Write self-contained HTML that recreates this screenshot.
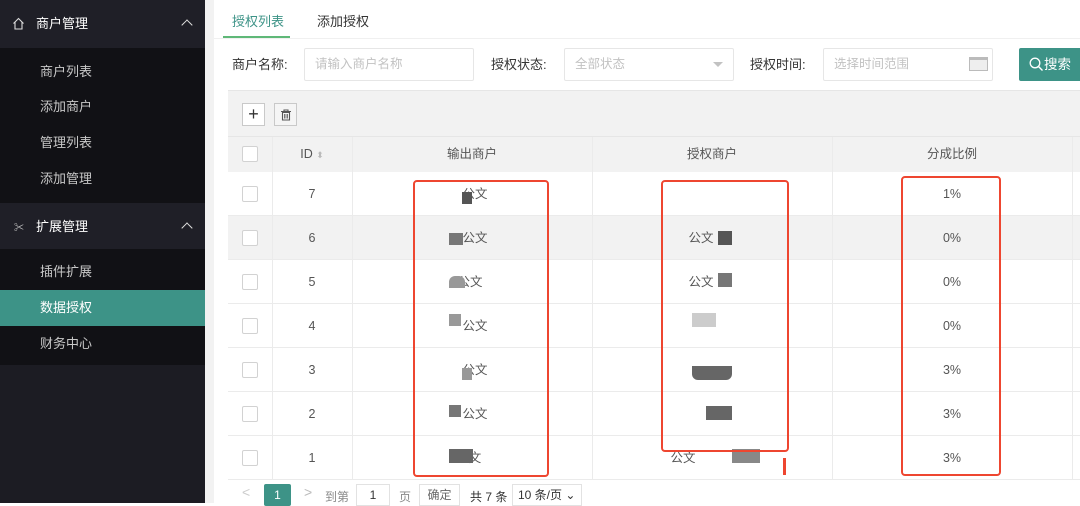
<!DOCTYPE html>
<html><head><meta charset="utf-8"><style>
*{margin:0;padding:0;box-sizing:border-box}
body{width:1080px;height:503px;overflow:hidden;background:#fff;font-family:"Liberation Sans","Noto Sans CJK SC",sans-serif;font-size:13px;color:#333;position:relative}
.a{position:absolute}
.side{left:0;top:0;width:205px;height:503px;background:#1c1c23}
.hd{left:0;width:205px;height:48px;color:#fff;font-size:13px;line-height:48px;padding-left:36px}
.sub{left:0;width:205px;background:#111115}
.it{left:0;width:205px;height:36px;line-height:36px;padding-left:40px;color:#c8c8c8;font-size:13px}
.chev{right:16px;top:20px;width:8px;height:8px;border-left:1.5px solid #ddd;border-top:1.5px solid #ddd;transform:rotate(45deg)}
.inp{border:1px solid #e6e6e6;height:33px;border-radius:2px;background:#fff;color:#c2c2c2;line-height:31px;padding-left:10px;font-size:12.5px}
.lbl{font-size:13px;color:#333;line-height:33px}
.row{left:228px;width:852px;height:44px;border-bottom:1px solid #ebebeb;background:#fff}
.cb{width:16px;height:16px;border:1px solid #d2d2d2;background:#fff;border-radius:2px}
.vl{width:1px;background:#ebebeb}
.c{text-align:center;line-height:44px;font-size:12.5px;color:#555}
.red{border:2px solid #ee4630;border-radius:4px}
.blk{background:#777}
</style></head><body>
<div class="a side"></div>
<div class="a hd" style="top:0;background:#1f1f27">商户管理</div>
<svg class="a" style="left:12px;top:17px" width="13" height="13" viewBox="0 0 13 13"><path d="M1.5 6.5L6.5 1.5L11.5 6.5M3 5.2V12H10V5.2" fill="none" stroke="#ddd" stroke-width="1.1"/></svg>
<div class="a chev" style="left:183px;top:21px"></div>
<div class="a sub" style="top:48px;height:155px"></div>
<div class="a it" style="top:54px">商户列表</div>
<div class="a it" style="top:89px">添加商户</div>
<div class="a it" style="top:125px">管理列表</div>
<div class="a it" style="top:161px">添加管理</div>
<div class="a hd" style="top:203px;background:#1f1f27">扩展管理</div>
<div class="a" style="left:14px;top:219px;color:#ccc;font-size:10px">✂</div>
<div class="a chev" style="left:183px;top:224px"></div>
<div class="a sub" style="top:249px;height:116px"></div>
<div class="a it" style="top:254px">插件扩展</div>
<div class="a it" style="top:290px;background:#3d9387;color:#fff">数据授权</div>
<div class="a it" style="top:326px">财务中心</div>
<div class="a" style="left:205px;top:0;width:9px;height:503px;background:#f2f2f2"></div>

<div class="a" style="left:214px;top:38px;width:866px;height:1px;background:#f0f0f0"></div>
<div class="a" style="left:232px;top:11px;color:#3d9387;font-size:13px">授权列表</div>
<div class="a" style="left:223px;top:36px;width:67px;height:2px;background:#5fb878"></div>
<div class="a" style="left:317px;top:11px;font-size:13px">添加授权</div>

<div class="a lbl" style="left:232px;top:48px">商户名称:</div>
<div class="a inp" style="left:304px;top:48px;width:170px">请输入商户名称</div>
<div class="a lbl" style="left:491px;top:48px">授权状态:</div>
<div class="a inp" style="left:564px;top:48px;width:170px">全部状态</div>
<div class="a" style="left:713px;top:62px;border:5px solid transparent;border-top:5px solid #c2c2c2"></div>
<div class="a lbl" style="left:750px;top:48px">授权时间:</div>
<div class="a inp" style="left:823px;top:48px;width:170px">选择时间范围</div>
<div class="a" style="left:969px;top:57px;width:19px;height:14px;border:1px solid #bbb;background:#eee;border-top:3px solid #bbb"></div>
<div class="a" style="left:1019px;top:48px;width:70px;height:33px;background:#3d9387;border-radius:2px;color:#fff;line-height:33px;padding-left:10px;font-size:13.5px">
<svg style="vertical-align:-3px" width="15" height="15" viewBox="0 0 15 15"><circle cx="6" cy="6" r="4.8" fill="none" stroke="#fff" stroke-width="1.3"/><path d="M9.5 9.5L13.5 13.5" stroke="#fff" stroke-width="1.4"/></svg>搜索</div>

<div class="a" style="left:228px;top:90px;width:852px;height:82px;background:#f2f2f2;border-top:1px solid #e6e6e6"></div>
<div class="a" style="left:242px;top:103px;width:23px;height:23px;border:1px solid #c9c9c9;background:#fff;text-align:center;line-height:20px;font-size:18px;color:#333">+</div>
<div class="a" style="left:274px;top:103px;width:23px;height:23px;border:1px solid #c9c9c9;background:#f5f5f5"></div>
<svg class="a" style="left:280px;top:109px" width="12" height="12" viewBox="0 0 12 12"><path d="M1 2.5H11M4 2.5V1H8V2.5M2.5 3.5H9.5V11H2.5Z" fill="none" stroke="#555" stroke-width="1.1"/><path d="M4.5 5V9.5M6 5V9.5M7.5 5V9.5" stroke="#555" stroke-width=".8"/></svg>
<div class="a" style="left:228px;top:136px;width:852px;height:1px;background:#e6e6e6"></div>
<div class="a cb" style="left:242px;top:146px"></div>
<div class="a c" style="left:272px;top:132px;width:80px;color:#555">ID <span style="color:#bbb;font-size:9px">⬍</span></div>
<div class="a c" style="left:352px;top:132px;width:240px">输出商户</div>
<div class="a c" style="left:592px;top:132px;width:240px">授权商户</div>
<div class="a c" style="left:832px;top:132px;width:240px">分成比例</div>

<div class="a row" style="top:172px"></div>
<div class="a row" style="top:216px;background:#f2f2f2"></div>
<div class="a row" style="top:260px"></div>
<div class="a row" style="top:304px"></div>
<div class="a row" style="top:348px"></div>
<div class="a row" style="top:392px"></div>
<div class="a row" style="top:436px"></div>
<div class="a vl" style="left:272px;top:137px;height:342px"></div>
<div class="a vl" style="left:352px;top:137px;height:342px"></div>
<div class="a vl" style="left:592px;top:137px;height:342px"></div>
<div class="a vl" style="left:832px;top:137px;height:342px"></div>
<div class="a vl" style="left:1072px;top:137px;height:342px"></div>

<div class="a cb" style="left:242px;top:186px"></div><div class="a c" style="left:272px;top:172px;width:80px">7</div>
<div class="a cb" style="left:242px;top:230px"></div><div class="a c" style="left:272px;top:216px;width:80px">6</div>
<div class="a cb" style="left:242px;top:274px"></div><div class="a c" style="left:272px;top:260px;width:80px">5</div>
<div class="a cb" style="left:242px;top:318px"></div><div class="a c" style="left:272px;top:304px;width:80px">4</div>
<div class="a cb" style="left:242px;top:362px"></div><div class="a c" style="left:272px;top:348px;width:80px">3</div>
<div class="a cb" style="left:242px;top:406px"></div><div class="a c" style="left:272px;top:392px;width:80px">2</div>
<div class="a cb" style="left:242px;top:450px"></div><div class="a c" style="left:272px;top:436px;width:80px">1</div>

<div class="a c" style="left:460px;top:172px;width:30px;line-height:44px">公文</div><div class="a blk" style="left:462px;top:192px;width:10px;height:12px;background:#555"></div>
<div class="a c" style="left:460px;top:216px;width:30px">公文</div><div class="a blk" style="left:449px;top:233px;width:14px;height:12px"></div>
<div class="a c" style="left:455px;top:260px;width:30px">公文</div><div class="a blk" style="left:449px;top:276px;width:16px;height:12px;background:#999;border-radius:6px 6px 0 0"></div>
<div class="a c" style="left:460px;top:304px;width:30px">公文</div><div class="a blk" style="left:449px;top:314px;width:12px;height:12px;background:#999"></div>
<div class="a c" style="left:460px;top:348px;width:30px">公文</div><div class="a blk" style="left:462px;top:368px;width:10px;height:12px;background:#999"></div>
<div class="a c" style="left:460px;top:392px;width:30px">公文</div><div class="a blk" style="left:449px;top:405px;width:12px;height:12px"></div>
<div class="a c" style="left:460px;top:436px;width:30px">文</div><div class="a blk" style="left:449px;top:449px;width:24px;height:14px;background:#666"></div>

<div class="a c" style="left:686px;top:216px;width:30px">公文</div><div class="a blk" style="left:718px;top:231px;width:14px;height:14px;background:#555"></div>
<div class="a c" style="left:686px;top:260px;width:30px">公文</div><div class="a blk" style="left:718px;top:273px;width:14px;height:14px"></div>
<div class="a blk" style="left:692px;top:313px;width:24px;height:14px;background:#ccc"></div>
<div class="a blk" style="left:692px;top:366px;width:40px;height:14px;background:#666;border-radius:0 0 6px 6px"></div>
<div class="a blk" style="left:706px;top:406px;width:26px;height:14px;background:#666"></div>
<div class="a c" style="left:668px;top:436px;width:30px">公文</div><div class="a blk" style="left:732px;top:449px;width:28px;height:14px;background:#888"></div>

<div class="a c" style="left:832px;top:172px;width:240px">1%</div>
<div class="a c" style="left:832px;top:216px;width:240px">0%</div>
<div class="a c" style="left:832px;top:260px;width:240px">0%</div>
<div class="a c" style="left:832px;top:304px;width:240px">0%</div>
<div class="a c" style="left:832px;top:348px;width:240px">3%</div>
<div class="a c" style="left:832px;top:392px;width:240px">3%</div>
<div class="a c" style="left:832px;top:436px;width:240px">3%</div>

<div class="a red" style="left:413px;top:180px;width:136px;height:297px"></div>
<div class="a red" style="left:661px;top:180px;width:128px;height:272px"></div>
<div class="a red" style="left:901px;top:176px;width:100px;height:300px"></div>
<div class="a" style="left:783px;top:458px;width:3px;height:17px;background:#ee4630"></div>

<div class="a" style="left:242px;top:484px;color:#ccc;font-size:14px">&lt;</div>
<div class="a" style="left:264px;top:484px;width:27px;height:22px;background:#3d9387;color:#fff;text-align:center;line-height:22px;border-radius:2px;font-size:12px">1</div>
<div class="a" style="left:304px;top:484px;color:#bbb;font-size:14px">&gt;</div>
<div class="a" style="left:325px;top:488px;color:#888;font-size:12px">到第</div>
<div class="a" style="left:356px;top:484px;width:34px;height:22px;border:1px solid #e2e2e2;text-align:center;line-height:20px;font-size:12px">1</div>
<div class="a" style="left:399px;top:488px;color:#888;font-size:12px">页</div>
<div class="a" style="left:419px;top:484px;width:41px;height:22px;border:1px solid #e2e2e2;text-align:center;line-height:20px;font-size:12px;color:#666">确定</div>
<div class="a" style="left:470px;top:488px;font-size:12px">共 7 条</div>
<div class="a" style="left:512px;top:484px;width:70px;height:22px;border:1px solid #e2e2e2;line-height:20px;font-size:12px;padding-left:5px">10 条/页 ⌄</div>
</body></html>
